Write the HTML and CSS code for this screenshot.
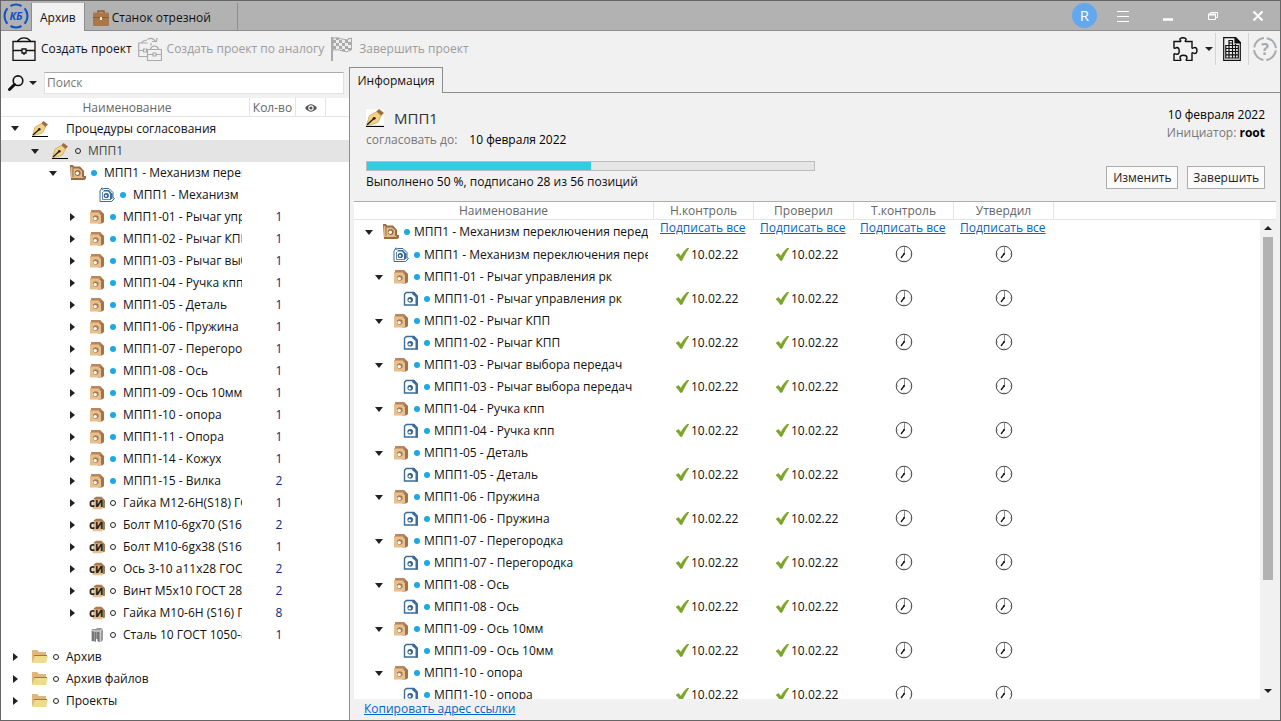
FILE: index.html
```html
<!DOCTYPE html>
<html lang="ru">
<head>
<meta charset="utf-8">
<title>Архив</title>
<link rel="stylesheet" href="styles.css">
</head>
<body>
<svg class="defs" aria-hidden="true">
  <symbol id="nib" viewBox="0 0 16 16"><path d="M0 15.500h16" stroke="#000"/><path d="M9 2.500L11.500 0 16 3.500 13 6.500z" fill="#a06a42"/><path d="M.5 14.500L3 6l6.500-3.500L13.500 6 10.500 12 4 14z" fill="#f3d185" stroke="#cfa35c" stroke-width=".7"/><path d="M1 14l6-5.500" stroke="#222" stroke-width="1.300"/><circle cx="7.300" cy="8.300" r="1.300" fill="#222"/></symbol>
  <symbol id="part" viewBox="0 0 16 16"><path d="M2 1h9l4 4v8l-2 1.500H9z" fill="#a3744a"/><path d="M1 4l2-3h8l2 3z" fill="#b98659"/><path d="M1 3.500h8.500L12 6v8.500H1z" fill="#e5c08e"/><circle cx="6.800" cy="9" r="2.800" fill="#a97a4f"/><circle cx="6.200" cy="9.600" r="1.700" fill="#fff"/></symbol>
  <symbol id="asm" viewBox="0 0 16 16"><path d="M0 0h3l1 1.500h6L14 6v5h2v2.500L14.500 15H1z" fill="#9c6a3e"/><path d="M1 2h1.500v10H13l1 1H1z" fill="#e0b988"/><path d="M3.500 3.500H9L12 6v6H3.500z" fill="#e5c08e"/><circle cx="7.700" cy="8" r="3" fill="#9c6a3e"/><circle cx="7.300" cy="8.300" r="1.700" fill="#fff"/></symbol>
  <symbol id="doc" viewBox="0 0 16 16"><path d="M1.500 3.300L3.300 1.500h7.500L14 5v9H1.500z" fill="#fff" stroke="#3a6d9a" stroke-width="1.400"/><path d="M9.500 1h2L15 5v9.500h-2.500V6L9 3z" fill="#3a6d9a"/><circle cx="7.200" cy="8.700" r="2.800" fill="#2f6593"/><circle cx="6.700" cy="9.200" r="1.200" fill="#fff"/></symbol>
  <symbol id="asmdoc" viewBox="0 0 16 16"><path d="M1 4L3 .8v1.700L5 1.500h5l4 4v5l1.500 1L12.500 14.500H1z" fill="#fff" stroke="#3a6d9a"/><path d="M5 3h5l3.500 4v5H11V7L9 4.500H4z" fill="#3a6d9a"/><path d="M3.500 5v7.500h8.500" fill="none" stroke="#3a6d9a" stroke-width=".8"/><circle cx="7.300" cy="8.500" r="2.600" fill="#2f6593"/><circle cx="7" cy="8.800" r="1.100" fill="#fff"/></symbol>
  <symbol id="si" viewBox="0 0 18 16"><path d="M5 3l3-2h6l4 4v8l-2 1z" fill="#a97a4f"/><path d="M4 4h9l2 2v9H4z" fill="#e5c08e"/><text x="0" y="13" class="si-text">си</text></symbol>
  <symbol id="steel" viewBox="0 0 16 16"><path d="M2 2h5l1-1h4l2 1v11l-2 2H9v-3H7v3L3 14 2 13z" fill="#9a9a9a"/><path d="M4 4v10M9 5v9" stroke="#555"/><path d="M2.500 3v10M11.500 4v11" stroke="#ccc"/><path d="M2 2l2 2h7l3-2" fill="none" stroke="#ddd"/><path d="M6.500 5v9" stroke="#777"/></symbol>
  <symbol id="folder" viewBox="0 0 16 16"><path d="M0 13V1h5l2 2h7v5z" fill="#dfb77a"/><path d="M2 6.500h13" stroke="#a9743f"/><path d="M0 14L3 7h13l-2 7z" fill="#ecdc8b"/></symbol>
  <symbol id="ok" viewBox="0 0 12 12"><path d="M0 6.500L2.300 5 4.500 7.500Q7 3 10.500 0H12Q8.500 5 5.500 11.500H4Q2.500 9 0 6.500z" fill="#7ba428" stroke="#7ba428" stroke-width=".5"/></symbol>
  <symbol id="clock" viewBox="0 0 18 18"><circle cx="9" cy="9" r="7.800" fill="none" stroke="#444"/><path d="M9.500 2v7" stroke="#888"/><path d="M9 9l-3 4" stroke="#111" stroke-width="1.300"/><circle cx="9" cy="9" r="1" fill="#111"/><path d="M2 9h1M15 9h1M9 15v1" stroke="#aaa"/></symbol>
</svg>
<div class="window">
  <header class="titlebar">
    <svg class="logo" viewBox="0 0 26 26"><g fill="none" stroke="#0b57c4" stroke-width="2"><path d="M7.500 3a11.500 11.500 0 0 1 11 0M7.500 23a11.500 11.500 0 0 0 11 0M4.500 5.300a11.500 11.500 0 0 0 0 15.400M21.500 5.300a11.500 11.500 0 0 1 0 15.400"/></g><text x="13" y="17" text-anchor="middle" class="logo-text">КБ</text></svg>
    <nav class="tabs">
      <button class="tab active">Архив</button>
      <button class="tab wide"><svg viewBox="0 0 16 16" width="16" height="16"><path d="M5 3V1h6v2" fill="none" stroke="#8b5a32" stroke-width="1.500"/><rect y="2.500" width="16" height="13.500" rx="1" fill="#aa7748"/><path d="M0 7.500h16" stroke="#8b5a32"/><path d="M7 7h2v3H7z" fill="#f6e5cc"/></svg>Станок отрезной</button>
    </nav>
    <div class="winbuttons">
      <span class="avatar">R</span>
      <button aria-label="Меню"><svg viewBox="0 0 12 12" width="12" height="12"><path d="M0 1.500h12M0 6.500h12M0 11.500h12" stroke="#fff"/></svg></button>
      <button aria-label="Свернуть"><svg viewBox="0 0 12 12" width="12" height="12"><path d="M1 9.500h10" stroke="#fff" stroke-width="2.500"/></svg></button>
      <button aria-label="Развернуть"><svg viewBox="0 0 12 12" width="12" height="12"><path d="M1.500 4.500h7v5h-7zM3.500 4V2.500h7v5H9" fill="none" stroke="#fff"/><path d="M1 4.500h8" stroke="#fff" stroke-width="2"/></svg></button>
      <button aria-label="Закрыть"><svg viewBox="0 0 12 12" width="12" height="12"><path d="M1.500 1.500l9 9M10.500 1.500l-9 9" stroke="#fff" stroke-width="2"/></svg></button>
    </div>
  </header>
  <div class="toolbar">
    <button class="tool"><svg viewBox="0 0 24 24" width="24" height="24" fill="none" stroke="#111" stroke-width="1.300"><path d="M5.500 4Q8 .8 12 .8T18.500 4M1 4.500h22v19H1zM1 13.500h9M14 13.500h9M10 12h4v4h-4zM12 16v2"/></svg>Создать проект</button>
    <button class="tool" disabled><svg viewBox="0 0 24 24" width="24" height="24" fill="none" stroke="#aaa" stroke-width="1.200"><path d="M9 19.500H.7V6h9M3 6Q5 3.500 9 3M13 8.500V6M.7 13.500h4.500M5.500 12h3v3h-3zM9.500 12.500h14v11h-14zM9.500 17.500h5M18.500 17.500h5M15 16h3v3h-3zM12.500 12q1-3 4-3t4 3"/><path d="M9.500 2.500q5-3 8.500 2.500m-4-.5h4.500L19 .8"/></svg>Создать проект по аналогу</button>
    <button class="tool" disabled><svg viewBox="0 0 24 24" width="24" height="24"><path d="M2 0v24" stroke="#aaa" stroke-width="2"/><path d="M3 1q5-1 9 1t9.500-1v12q-5 3-9 1T3 13z" fill="#eee" stroke="#aaa"/><path d="M3 3h3v3H3zM9 3h3v3H9zM15 3h3v3h-3zM6 6h3v3H6zM12 6h3v3h-3zM18 5h3v3h-3zM3 9h3v3H3zM9 9h3v3H9zM15 9h3v3h-3zM12 12h3v2h-3zM18 11h3v2h-3zM6 1h3v2H6zM18 1h3v1h-3z" fill="#aaa"/></svg>Завершить проект</button>
    <div class="right-tools">
      <button class="tool puzzle" aria-label="Дополнения"><svg viewBox="0 0 26 24" width="26" height="24" fill="none" stroke="#111" stroke-width="1.400"><path d="M1 4.500h6.500C8.500 4 6.500 3 7 1.800 8 .3 12 .3 13 1.800 13.500 3 11.500 4 12.500 4.500H19v6.500c.5 1 1.500-.5 2.700-.5 3 0 3 6 0 6-1.200 0-2.200-1.500-2.700-.5v7.500h-5.500c-1-.5.500-1.500.5-3 0-3-7-3-7 0 0 1.500 1.500 2.500.5 3H1V17c.5-1 1.500.5 3 .3 3-.3 3-6.500 0-6.800-1.500 0-2.500 1.500-3 .5z"/></svg><span class="down"></span></button>
      <button class="tool sep" aria-label="Таблица"><svg viewBox="0 0 18 24" width="18" height="24" fill="none" stroke="#111" stroke-width="1.200"><path d="M.7.700h11.600l5 5v17.600H.7z"/><path d="M12 0v6h6z" fill="#111"/><path d="M6 3v18M9.500 3v18M12.500 7v14M2.800 21V8.500h12.500V21zM2.800 11.500h12.500M2.800 14.500h12.500M2.800 17.800h12.500M5.500 3.500h4M5.500 6h4"/></svg></button>
      <button class="tool sep" aria-label="Справка"><svg viewBox="0 0 24 24" width="24" height="24"><circle cx="12" cy="12" r="11" fill="none" stroke="#aaa" stroke-width="2" stroke-dasharray="14.300 3" stroke-dashoffset="-1.500"/><text x="12" y="18" text-anchor="middle" class="help-text">?</text></svg></button>
    </div>
  </div>
  <main class="body">
    <aside class="side">
      <div class="search">
        <svg viewBox="0 0 16 16" width="16" height="16" fill="none" stroke="#111"><circle cx="10" cy="5.700" r="4.800" stroke-width="1.600"/><path d="M6.500 9.500L1.500 14.500" stroke-width="3" stroke-linecap="round"/></svg><span class="down"></span>
        <input type="text" placeholder="Поиск" aria-label="Поиск">
      </div>
      <table class="tree">
        <colgroup><col class="c-name"><col class="c-count"><col class="c-eye"><col></colgroup>
        <thead><tr><th>Наименование</th><th>Кол-во</th><th><svg class="eye" viewBox="0 0 12 8" width="12" height="8"><path d="M0 4Q6-3.500 12 4 6 11.500 0 4z" fill="#555"/><circle cx="6" cy="4" r="2.700" fill="#fff"/><circle cx="6" cy="4" r="1.600" fill="#555"/></svg></th><th></th></tr></thead>
        <tbody>
        <tr><td><div class="n l0"><button class="c open"></button><svg class="i"><use href="#nib"/></svg><i class="d"></i><span>Процедуры согласования</span></div></td><td></td></tr>
        <tr class="sel"><td><div class="n l1"><button class="c open"></button><svg class="i"><use href="#nib"/></svg><i class="d ring"></i><span>МПП1</span></div></td><td></td><td></td><td></td></tr>
        <tr><td><div class="n l2"><button class="c open"></button><svg class="i"><use href="#asm"/></svg><i class="d dot"></i><span>МПП1 - Механизм переключения</span></div></td><td></td></tr>
        <tr><td><div class="n l4"><i class="c"></i><svg class="i"><use href="#asmdoc"/></svg><i class="d dot"></i><span>МПП1 - Механизм переключения</span></div></td><td></td></tr>
        <tr><td><div class="n l3"><button class="c shut"></button><svg class="i"><use href="#part"/></svg><i class="d dot"></i><span>МПП1-01 - Рычаг управления</span></div></td><td>1</td></tr>
        <tr><td><div class="n l3"><button class="c shut"></button><svg class="i"><use href="#part"/></svg><i class="d dot"></i><span>МПП1-02 - Рычаг КПП</span></div></td><td>1</td></tr>
        <tr><td><div class="n l3"><button class="c shut"></button><svg class="i"><use href="#part"/></svg><i class="d dot"></i><span>МПП1-03 - Рычаг выбора</span></div></td><td>1</td></tr>
        <tr><td><div class="n l3"><button class="c shut"></button><svg class="i"><use href="#part"/></svg><i class="d dot"></i><span>МПП1-04 - Ручка кпп</span></div></td><td>1</td></tr>
        <tr><td><div class="n l3"><button class="c shut"></button><svg class="i"><use href="#part"/></svg><i class="d dot"></i><span>МПП1-05 - Деталь</span></div></td><td>1</td></tr>
        <tr><td><div class="n l3"><button class="c shut"></button><svg class="i"><use href="#part"/></svg><i class="d dot"></i><span>МПП1-06 - Пружина</span></div></td><td>1</td></tr>
        <tr><td><div class="n l3"><button class="c shut"></button><svg class="i"><use href="#part"/></svg><i class="d dot"></i><span>МПП1-07 - Перегородка</span></div></td><td>1</td></tr>
        <tr><td><div class="n l3"><button class="c shut"></button><svg class="i"><use href="#part"/></svg><i class="d dot"></i><span>МПП1-08 - Ось</span></div></td><td>1</td></tr>
        <tr><td><div class="n l3"><button class="c shut"></button><svg class="i"><use href="#part"/></svg><i class="d dot"></i><span>МПП1-09 - Ось 10мм</span></div></td><td>1</td></tr>
        <tr><td><div class="n l3"><button class="c shut"></button><svg class="i"><use href="#part"/></svg><i class="d dot"></i><span>МПП1-10 - опора</span></div></td><td>1</td></tr>
        <tr><td><div class="n l3"><button class="c shut"></button><svg class="i"><use href="#part"/></svg><i class="d dot"></i><span>МПП1-11 - Опора</span></div></td><td>1</td></tr>
        <tr><td><div class="n l3"><button class="c shut"></button><svg class="i"><use href="#part"/></svg><i class="d dot"></i><span>МПП1-14 - Кожух</span></div></td><td>1</td></tr>
        <tr><td><div class="n l3"><button class="c shut"></button><svg class="i"><use href="#part"/></svg><i class="d dot"></i><span>МПП1-15 - Вилка</span></div></td><td>2</td></tr>
        <tr><td><div class="n l3"><button class="c shut"></button><svg class="i"><use href="#si"/></svg><i class="d ring"></i><span>Гайка М12-6Н(S18) ГОСТ</span></div></td><td>1</td></tr>
        <tr><td><div class="n l3"><button class="c shut"></button><svg class="i"><use href="#si"/></svg><i class="d ring"></i><span>Болт М10-6gx70 (S16)</span></div></td><td>2</td></tr>
        <tr><td><div class="n l3"><button class="c shut"></button><svg class="i"><use href="#si"/></svg><i class="d ring"></i><span>Болт М10-6gx38 (S16)</span></div></td><td>1</td></tr>
        <tr><td><div class="n l3"><button class="c shut"></button><svg class="i"><use href="#si"/></svg><i class="d ring"></i><span>Ось 3-10 a11x28 ГОСТ</span></div></td><td>2</td></tr>
        <tr><td><div class="n l3"><button class="c shut"></button><svg class="i"><use href="#si"/></svg><i class="d ring"></i><span>Винт М5х10 ГОСТ 2896</span></div></td><td>2</td></tr>
        <tr><td><div class="n l3"><button class="c shut"></button><svg class="i"><use href="#si"/></svg><i class="d ring"></i><span>Гайка М10-6Н (S16) ГОСТ</span></div></td><td>8</td></tr>
        <tr><td><div class="n l3"><i class="c"></i><svg class="i"><use href="#steel"/></svg><i class="d ring"></i><span>Сталь 10 ГОСТ 1050-88</span></div></td><td>1</td></tr>
        <tr><td><div class="n l0"><button class="c shut"></button><svg class="i"><use href="#folder"/></svg><i class="d ring"></i><span>Архив</span></div></td><td></td></tr>
        <tr><td><div class="n l0"><button class="c shut"></button><svg class="i"><use href="#folder"/></svg><i class="d ring"></i><span>Архив файлов</span></div></td><td></td></tr>
        <tr><td><div class="n l0"><button class="c shut"></button><svg class="i"><use href="#folder"/></svg><i class="d ring"></i><span>Проекты</span></div></td><td></td></tr>
        </tbody>
      </table>
    </aside>
    <section class="content">
      <div class="tabstrip"><button class="info-tab">Информация</button></div>
      <div class="summary">
        <div class="summary-left">
          <h1><svg viewBox="0 0 16 16" width="18" height="18"><use href="#nib"/></svg>МПП1</h1>
          <p class="due"><span>согласовать до:</span><b>10 февраля 2022</b></p>
          <div class="progress" role="progressbar" aria-valuenow="50"><div class="fill" style="width:50%"></div></div>
          <p class="done">Выполнено <b>50 %</b>, подписано <b>28</b> из <b>56</b> позиций</p>
        </div>
        <div class="summary-right">
          <p>10 февраля 2022</p>
          <p><span>Инициатор:</span> <strong>root</strong></p>
          <div class="actions"><button>Изменить</button><button>Завершить</button></div>
        </div>
      </div>
      <div class="grid">
        <table class="head">
          <colgroup><col class="g-name"><col class="g-sign"><col class="g-sign"><col class="g-sign"><col class="g-sign"><col></colgroup>
          <thead><tr><th>Наименование</th><th>Н.контроль</th><th>Проверил</th><th>Т.контроль</th><th>Утвердил</th><th></th></tr></thead>
        </table>
        <div class="scroll">
          <div class="view">
          <table class="rows">
            <colgroup><col class="g-name"><col class="g-sign"><col class="g-sign"><col class="g-sign"><col class="g-sign"><col></colgroup>
            <tbody>
            <tr class="all"><td><div class="n r0"><button class="c open"></button><svg class="i"><use href="#asm"/></svg><i class="d dot"></i><span>МПП1 - Механизм переключения передач</span></div></td><td><a href="#">Подписать все</a></td><td><a href="#">Подписать все</a></td><td><a href="#">Подписать все</a></td><td><a href="#">Подписать все</a></td></tr>
            <tr><td><div class="n r1"><i class="c"></i><svg class="i"><use href="#asmdoc"/></svg><i class="d dot"></i><span>МПП1 - Механизм переключения передач</span></div></td><td><svg class="ok"><use href="#ok"/></svg>10.02.22</td><td><svg class="ok"><use href="#ok"/></svg>10.02.22</td><td><svg class="clock"><use href="#clock"/></svg></td><td><svg class="clock"><use href="#clock"/></svg></td></tr>
            <tr><td><div class="n r1"><button class="c open"></button><svg class="i"><use href="#part"/></svg><i class="d dot"></i><span>МПП1-01 - Рычаг управления рк</span></div></td></tr>
            <tr><td><div class="n r2"><i class="c"></i><svg class="i"><use href="#doc"/></svg><i class="d dot"></i><span>МПП1-01 - Рычаг управления рк</span></div></td><td><svg class="ok"><use href="#ok"/></svg>10.02.22</td><td><svg class="ok"><use href="#ok"/></svg>10.02.22</td><td><svg class="clock"><use href="#clock"/></svg></td><td><svg class="clock"><use href="#clock"/></svg></td></tr>
            <tr><td><div class="n r1"><button class="c open"></button><svg class="i"><use href="#part"/></svg><i class="d dot"></i><span>МПП1-02 - Рычаг КПП</span></div></td></tr>
            <tr><td><div class="n r2"><i class="c"></i><svg class="i"><use href="#doc"/></svg><i class="d dot"></i><span>МПП1-02 - Рычаг КПП</span></div></td><td><svg class="ok"><use href="#ok"/></svg>10.02.22</td><td><svg class="ok"><use href="#ok"/></svg>10.02.22</td><td><svg class="clock"><use href="#clock"/></svg></td><td><svg class="clock"><use href="#clock"/></svg></td></tr>
            <tr><td><div class="n r1"><button class="c open"></button><svg class="i"><use href="#part"/></svg><i class="d dot"></i><span>МПП1-03 - Рычаг выбора передач</span></div></td></tr>
            <tr><td><div class="n r2"><i class="c"></i><svg class="i"><use href="#doc"/></svg><i class="d dot"></i><span>МПП1-03 - Рычаг выбора передач</span></div></td><td><svg class="ok"><use href="#ok"/></svg>10.02.22</td><td><svg class="ok"><use href="#ok"/></svg>10.02.22</td><td><svg class="clock"><use href="#clock"/></svg></td><td><svg class="clock"><use href="#clock"/></svg></td></tr>
            <tr><td><div class="n r1"><button class="c open"></button><svg class="i"><use href="#part"/></svg><i class="d dot"></i><span>МПП1-04 - Ручка кпп</span></div></td></tr>
            <tr><td><div class="n r2"><i class="c"></i><svg class="i"><use href="#doc"/></svg><i class="d dot"></i><span>МПП1-04 - Ручка кпп</span></div></td><td><svg class="ok"><use href="#ok"/></svg>10.02.22</td><td><svg class="ok"><use href="#ok"/></svg>10.02.22</td><td><svg class="clock"><use href="#clock"/></svg></td><td><svg class="clock"><use href="#clock"/></svg></td></tr>
            <tr><td><div class="n r1"><button class="c open"></button><svg class="i"><use href="#part"/></svg><i class="d dot"></i><span>МПП1-05 - Деталь</span></div></td></tr>
            <tr><td><div class="n r2"><i class="c"></i><svg class="i"><use href="#doc"/></svg><i class="d dot"></i><span>МПП1-05 - Деталь</span></div></td><td><svg class="ok"><use href="#ok"/></svg>10.02.22</td><td><svg class="ok"><use href="#ok"/></svg>10.02.22</td><td><svg class="clock"><use href="#clock"/></svg></td><td><svg class="clock"><use href="#clock"/></svg></td></tr>
            <tr><td><div class="n r1"><button class="c open"></button><svg class="i"><use href="#part"/></svg><i class="d dot"></i><span>МПП1-06 - Пружина</span></div></td></tr>
            <tr><td><div class="n r2"><i class="c"></i><svg class="i"><use href="#doc"/></svg><i class="d dot"></i><span>МПП1-06 - Пружина</span></div></td><td><svg class="ok"><use href="#ok"/></svg>10.02.22</td><td><svg class="ok"><use href="#ok"/></svg>10.02.22</td><td><svg class="clock"><use href="#clock"/></svg></td><td><svg class="clock"><use href="#clock"/></svg></td></tr>
            <tr><td><div class="n r1"><button class="c open"></button><svg class="i"><use href="#part"/></svg><i class="d dot"></i><span>МПП1-07 - Перегородка</span></div></td></tr>
            <tr><td><div class="n r2"><i class="c"></i><svg class="i"><use href="#doc"/></svg><i class="d dot"></i><span>МПП1-07 - Перегородка</span></div></td><td><svg class="ok"><use href="#ok"/></svg>10.02.22</td><td><svg class="ok"><use href="#ok"/></svg>10.02.22</td><td><svg class="clock"><use href="#clock"/></svg></td><td><svg class="clock"><use href="#clock"/></svg></td></tr>
            <tr><td><div class="n r1"><button class="c open"></button><svg class="i"><use href="#part"/></svg><i class="d dot"></i><span>МПП1-08 - Ось</span></div></td></tr>
            <tr><td><div class="n r2"><i class="c"></i><svg class="i"><use href="#doc"/></svg><i class="d dot"></i><span>МПП1-08 - Ось</span></div></td><td><svg class="ok"><use href="#ok"/></svg>10.02.22</td><td><svg class="ok"><use href="#ok"/></svg>10.02.22</td><td><svg class="clock"><use href="#clock"/></svg></td><td><svg class="clock"><use href="#clock"/></svg></td></tr>
            <tr><td><div class="n r1"><button class="c open"></button><svg class="i"><use href="#part"/></svg><i class="d dot"></i><span>МПП1-09 - Ось 10мм</span></div></td></tr>
            <tr><td><div class="n r2"><i class="c"></i><svg class="i"><use href="#doc"/></svg><i class="d dot"></i><span>МПП1-09 - Ось 10мм</span></div></td><td><svg class="ok"><use href="#ok"/></svg>10.02.22</td><td><svg class="ok"><use href="#ok"/></svg>10.02.22</td><td><svg class="clock"><use href="#clock"/></svg></td><td><svg class="clock"><use href="#clock"/></svg></td></tr>
            <tr><td><div class="n r1"><button class="c open"></button><svg class="i"><use href="#part"/></svg><i class="d dot"></i><span>МПП1-10 - опора</span></div></td></tr>
            <tr><td><div class="n r2"><i class="c"></i><svg class="i"><use href="#doc"/></svg><i class="d dot"></i><span>МПП1-10 - опора</span></div></td><td><svg class="ok"><use href="#ok"/></svg>10.02.22</td><td><svg class="ok"><use href="#ok"/></svg>10.02.22</td><td><svg class="clock"><use href="#clock"/></svg></td><td><svg class="clock"><use href="#clock"/></svg></td></tr>
            </tbody>
          </table>
          </div>
          <div class="bar"><span class="up"></span><div class="track"><div class="thumb" style="height:77%"></div></div><span class="down"></span></div>
        </div>
      </div>
      <footer><a href="#">Копировать адрес ссылки</a></footer>
    </section>
  </main>
</div>
</body>
</html>
```

FILE: styles.css
```css
* { box-sizing: border-box; }
html, body { height: 100%; margin: 0; }
body { font: 12px/16px "Open Sans", "Noto Sans", sans-serif; color: #111; background: #f1f1f1; }
button, input { font: inherit; color: inherit; }
button { border: 0; padding: 0; background: none; white-space: nowrap; }
p, h1 { margin: 0; font-weight: normal; }
b { font-weight: normal; color: #000; }
a { color: #06c; text-decoration: underline; }
svg { flex: none; display: block; }
.defs { position: absolute; width: 0; height: 0; }

.window { height: 100vh; display: flex; flex-direction: column; border: 1px solid #666; overflow: hidden; }

.titlebar { display: flex; height: 30px; background: #b2b2b2; border-bottom: 1px solid #8b8d93; }
.logo { width: 26px; height: 26px; margin: 2px 2px 0 2px; }
.logo-text { font: italic bold 11px "Open Sans", "Noto Sans", sans-serif; fill: #0b57c4; }
.tabs { display: flex; padding-top: 2px; }
.tab { display: flex; align-items: center; gap: 3px; padding: 2px 8px 0; border-right: 1px solid #8b8d93; }
.tab.active { background: #f1f1f1; margin-bottom: -1px; padding: 2px 8px 0; border-left: 1px solid #8b8d93; }
.tab.wide { width: 153px; }
.winbuttons { margin-left: auto; display: flex; align-items: center; }
.winbuttons button { width: 45px; height: 28px; display: flex; align-items: center; justify-content: center; }
.avatar { width: 25px; height: 25px; margin-right: 3px; border-radius: 50%; background: #62a8ee; color: #fff; font-size: 15px; line-height: 25px; text-align: center; }

.toolbar { display: flex; align-items: center; height: 36px; padding-left: 11px; gap: 6px; }
.tool { display: flex; align-items: center; gap: 5px; height: 32px; }
.tool:disabled { color: #9c9c9c; }
.right-tools { display: flex; margin-left: auto; }
.puzzle { padding-right: 2px; gap: 6px; }
.tool.sep { border-left: 1px solid #d4d4d4; padding: 0 7px; }
.tool.sep + .sep { padding: 0 3px 0 4px; }
.help-text { font: bold 16px "Open Sans", "Noto Sans", sans-serif; fill: #aaa; }

.down, .up { width: 0; height: 0; border: 4px solid transparent; }
.down { border-top-color: #222; border-bottom: 0; }
.up { border-bottom-color: #222; border-top: 0; }

.body { flex: 1; min-height: 0; display: flex; }
.side { width: 348px; flex: none; display: flex; flex-direction: column; background: #fff; }
.search { display: flex; align-items: center; height: 31px; padding: 0 5px 0 7px; gap: 5px; background: #f1f1f1; }
.search input { flex: 1; min-width: 0; height: 22px; margin-left: 2px; padding: 0 2px; border: 1px solid #dfe1e5; border-top-color: #abadb3; background: #fff; outline: 0; }
.search input::placeholder { color: #777; opacity: 1; }

table { table-layout: fixed; width: 100%; border-collapse: separate; border-spacing: 0; }
th { height: 19px; padding: 0; font-weight: normal; color: #666; background: #fff; border-right: 1px solid #e4e4e4; border-bottom: 1px solid #e4e4e4; }
th:last-child { border-right: 0; }
td { height: 22px; padding: 0; }
.c-name { width: 249px; }
.c-count { width: 46px; }
.c-eye { width: 30px; }
.eye { margin: 0 auto; }
.tree { margin-bottom: auto; }
.tree th { padding-top: 1px; }
.tree th:first-child { padding-left: 4px; }
.tree tbody td:nth-child(2) { text-align: center; color: #0b2a80; padding-left: 12px; }
.tree tbody tr:first-child td { height: 23px; }
.sel td { background: #e4e4e4; color: #444; }

.n { display: flex; align-items: center; height: 22px; overflow: hidden; margin-right: 8px; white-space: nowrap; }
.c { width: 16px; height: 16px; flex: none; display: flex; align-items: center; justify-content: center; }
.c.open::before { content: ""; border: 4px solid transparent; border-top: 5px solid #222; border-bottom: 0; }
.c.shut::before { content: ""; border: 4px solid transparent; border-left: 5px solid #222; border-right: 0; }
.i { width: 16px; height: 16px; margin: 0 4px 0 9px; }
.d { width: 8px; height: 8px; flex: none; margin-right: 6px; display: flex; align-items: center; justify-content: center; }
.dot::before { content: ""; width: 6px; height: 6px; border-radius: 50%; background: #1ba9e6; }
.ring::before { content: ""; width: 4px; height: 4px; border-radius: 50%; border: 1px solid #222; }
.n span { overflow: hidden; }
.l0 { padding-left: 6px; }
.l1 { padding-left: 26px; }
.l1 .i { margin-right: 6px; }
.l2 { padding-left: 44px; }
.l3 { padding-left: 63px; }
.l4 { padding-left: 73px; }
.si-text { font: bold 13px "Open Sans", "Noto Sans", sans-serif; fill: #222; }

.content { flex: 1; min-width: 0; display: flex; flex-direction: column; }
.tabstrip { display: flex; height: 26px; border-left: 1px solid #8b8d93; }
.tabstrip::after { content: ""; flex: 1; border-bottom: 1px solid #8b8d93; }
.info-tab { width: 93px; border: 1px solid #8b8d93; border-width: 1px 1px 0 0; }
.summary { display: flex; justify-content: space-between; height: 108px; padding: 14px 15px 0 16px; border-left: 1px solid #8b8d93; }
.summary-left { width: 449px; }
h1 { display: flex; align-items: center; gap: 10px; height: 21px; font-size: 15px; color: #333; }
h1 svg { background: #fff; }
.due { display: flex; gap: 12px; padding-top: 4px; color: #777; }
.progress { height: 10px; margin: 13px 0 3px; border: 1px solid #bcbcbc; background: #e6e6e6; }
.fill { height: 8px; background: #33cce4; }
.summary-right { text-align: right; color: #000; }
.summary-right p { height: 18px; }
.summary-right span { color: #777; }
.actions { display: flex; justify-content: flex-end; gap: 9px; margin-top: 23px; }
.actions button { min-width: 72px; height: 23px; padding: 0 5px; border: 1px solid #adadad; background: #fbfbfb; color: #222; }

.grid { flex: 1; min-height: 0; display: flex; flex-direction: column; padding: 0 4px 0 4px; border-left: 1px solid #8b8d93; }
.head { border-top: 1px solid #adadad; flex: none; }
.head th { height: 18px; line-height: 16px; }
.scroll { flex: 1; min-height: 0; display: flex; background: #fff; }
.view { flex: 1; min-width: 0; overflow: hidden; }
.g-name { width: 300px; }
.g-sign { width: 100px; }
.rows td + td { padding-left: 22px; }
.rows .all td { height: 24px; }
.rows .all td + td { padding: 0 6px; vertical-align: top; }
.rows .n { margin-right: 6px; }
.rows .i { margin-left: 6px; }
.rows .d { margin-right: 3px; }
.r0 { padding-left: 7px; }
.r1 { padding-left: 17px; }
.r2 { padding-left: 27px; }
.ok { display: inline-block; width: 13px; height: 13px; margin-right: 2px; vertical-align: -2px; }
.clock { width: 18px; height: 18px; margin: 0 0 2px 19px; }
.bar { width: 16px; display: flex; flex-direction: column; align-items: center; gap: 7px; padding: 6px 0; background: #f1f1f1; }
.track { flex: 1; width: 10px; }
.thumb { background: #b2b2b2; }
footer { height: 21px; padding: 2px 14px 0; border-left: 1px solid #8b8d93; }
```
